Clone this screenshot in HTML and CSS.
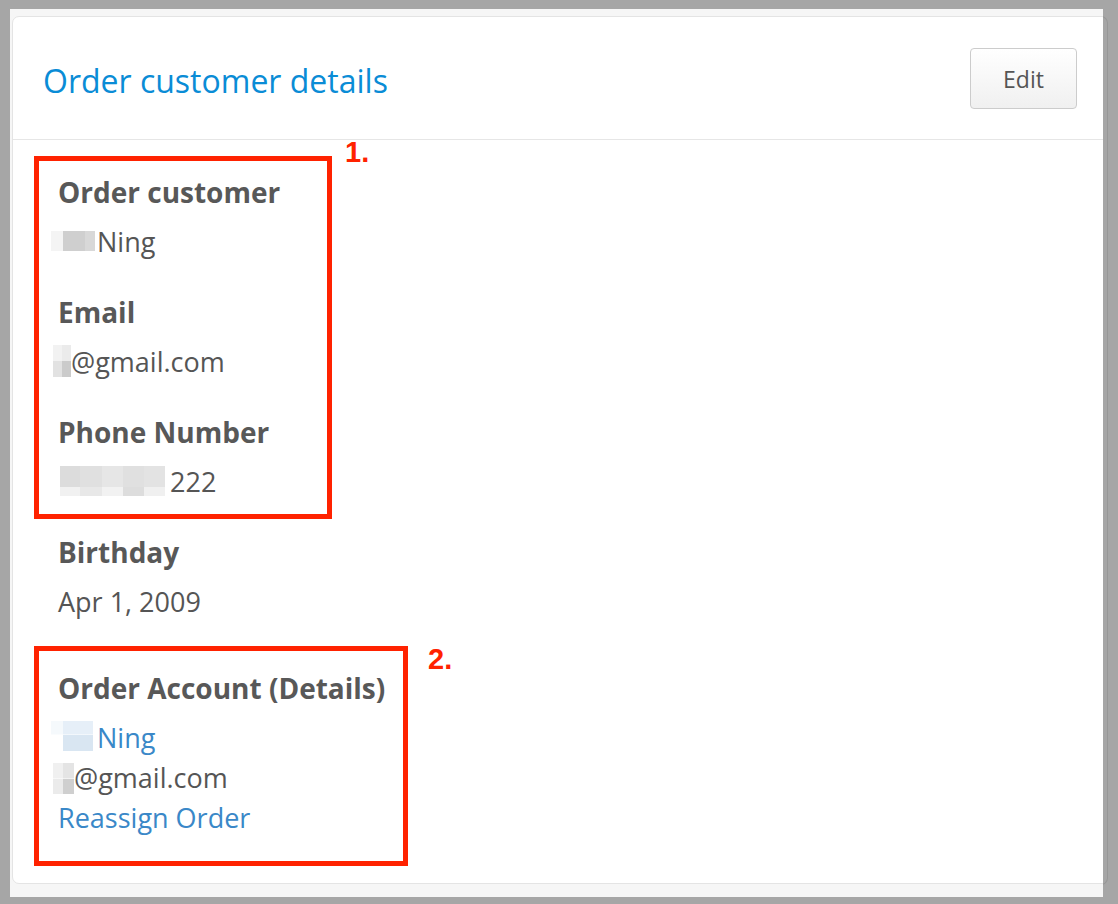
FILE: index.html
```html
<!DOCTYPE html>
<html>
<head>
<meta charset="utf-8">
<link rel="stylesheet" href="styles.css">
</head>
<body>
<div class="card-edge"></div>
<div class="window">
  <div class="card">
    <div class="card-header">
      <h2 class="title">Order customer details</h2>
      <button class="btn">Edit</button>
    </div>
    <div class="card-body">
      <div class="field">
        <div class="label">Order customer</div>
        <div class="value"><span class="blur blur-name"></span>Ning</div>
      </div>
      <div class="field">
        <div class="label">Email</div>
        <div class="value"><span class="blur blur-email"></span>@gmail.com</div>
      </div>
      <div class="field">
        <div class="label">Phone Number</div>
        <div class="value"><span class="blur blur-phone"></span>222</div>
      </div>
      <div class="field">
        <div class="label">Birthday</div>
        <div class="value">Apr 1, 2009</div>
      </div>
      <div class="field account">
        <div class="label">Order Account (Details)</div>
        <div class="value"><a class="link"><span class="blur blur-acc-name"></span>Ning</a></div>
        <div class="value"><span class="blur blur-acc-email"></span>@gmail.com</div>
        <div class="value"><a class="link">Reassign Order</a></div>
      </div>
    </div>
  </div>
  <div class="mark mark-1"></div>
  <div class="mark-num num-1">1.</div>
  <div class="mark mark-2"></div>
  <div class="mark-num num-2">2.</div>
</div>
</body>
</html>
```
FILE: styles.css
```css
html, body {
  margin: 0;
  padding: 0;
}
body {
  background: #a6a6a6;
  width: 1118px;
  height: 904px;
  position: relative;
  overflow: hidden;
  font-family: "Open Sans", "Noto Sans", sans-serif;
}
.card-edge {
  position: absolute;
  left: 1080px;
  top: 16px;
  width: 27px;
  height: 867px;
  border: 1px solid #979797;
  border-left: none;
  border-radius: 0 7px 7px 0;
  z-index: 0;
}
.window {
  position: absolute;
  left: 10px;
  top: 9px;
  width: 1093px;
  height: 888px;
  background: #f6f6f6;
  overflow: hidden;
  z-index: 1;
  padding: 7px 0 0 2px;
  box-sizing: border-box;
}
.card {
  width: 1097px;
  height: 868px;
  box-sizing: border-box;
  background: #fff;
  border: 1px solid #e4e4e4;
  border-radius: 7px;
}
.card-header {
  height: 123px;
  box-sizing: border-box;
  border-bottom: 1px solid #e6e6e6;
  display: flex;
  align-items: center;
  justify-content: space-between;
  padding: 0 31px 0 30px;
}
.title {
  margin: 0;
  font-weight: 400;
  font-size: 32px;
  color: #0a8cd6;
  line-height: 40px;
  padding-top: 6px;
}
.btn {
  width: 107px;
  height: 61px;
  border: 1px solid #cccccc;
  border-radius: 4px;
  background: linear-gradient(#ffffff, #f0f0f0);
  font-family: "Open Sans", "Noto Sans", sans-serif;
  font-size: 23px;
  color: #555;
  padding: 0;
  margin-top: 1px;
}
.card-body {
  padding: 32px 0 0 45px;
}
.field {
  margin-bottom: 30px;
}
.label {
  font-weight: 700;
  font-size: 28px;
  line-height: 40px;
  color: #585858;
  margin-bottom: 10px;
}
.value {
  font-size: 27px;
  line-height: 40px;
  color: #555;
}
.account {
  padding-top: 16px;
}
.link {
  color: #3a88c8;
  text-decoration: none;
}
.blur {
  display: inline-block;
  vertical-align: top;
}
.blur-name {
  width: 44px;
  height: 20px;
  margin: 9px 2px 0 -7px;
  background: linear-gradient(90deg, #f4f4f4 0 12px, #cfcfcf 12px 34px, #d8d8d8 34px);
}
.blur-email {
  width: 18px;
  height: 32px;
  margin: 3px 0 0 -5px;
  background:
    linear-gradient(90deg, #f2f2f2 0 9px, #ebebeb 9px) top / 100% 50% no-repeat,
    linear-gradient(90deg, #e2e2e2 0 9px, #cbcbcb 9px) bottom / 100% 50% no-repeat;
}
.blur-phone {
  width: 105px;
  height: 30px;
  margin: 4px 5px 0 2px;
  background:
    linear-gradient(90deg, #dcdcdc 0 20px, #e0e0e0 20px 42px, #e6e6e6 42px 63px, #e0e0e0 63px 84px, #e3e3e3 84px) top / 100% 70% no-repeat,
    linear-gradient(90deg, #f1f1f1 0 20px, #e8e8e8 20px 42px, #f2f2f2 42px 63px, #dddddd 63px 84px, #f0f0f0 84px) bottom / 100% 30% no-repeat;
}
.blur-acc-name {
  width: 42px;
  height: 30px;
  margin: 3px 4px 0 -7px;
  background:
    linear-gradient(90deg, #f5f9fc 0 12px, #e6eff8 12px) top / 100% 45% no-repeat,
    linear-gradient(90deg, #ffffff 0 12px, #d9e6f2 12px) bottom / 100% 55% no-repeat;
}
.blur-acc-email {
  width: 21px;
  height: 31px;
  margin: 5px 0 0 -5px;
  background:
    linear-gradient(90deg, #f0f0f0 0 10px, #e4e4e4 10px) top / 100% 50% no-repeat,
    linear-gradient(90deg, #ebebeb 0 10px, #cfcfcf 10px) bottom / 100% 50% no-repeat;
}
.mark {
  position: absolute;
  border: 5px solid #ff2200;
  box-sizing: border-box;
}
.mark-1 {
  left: 24px;
  top: 147px;
  width: 298px;
  height: 363px;
}
.mark-2 {
  left: 24px;
  top: 637px;
  width: 374px;
  height: 220px;
}
.mark-num {
  position: absolute;
  font-family: "Liberation Sans", Arial, sans-serif;
  font-weight: 700;
  font-size: 29px;
  line-height: 1;
  color: #ff2200;
}
.num-1 {
  left: 335px;
  top: 129px;
}
.num-2 {
  left: 418px;
  top: 636px;
}
```
